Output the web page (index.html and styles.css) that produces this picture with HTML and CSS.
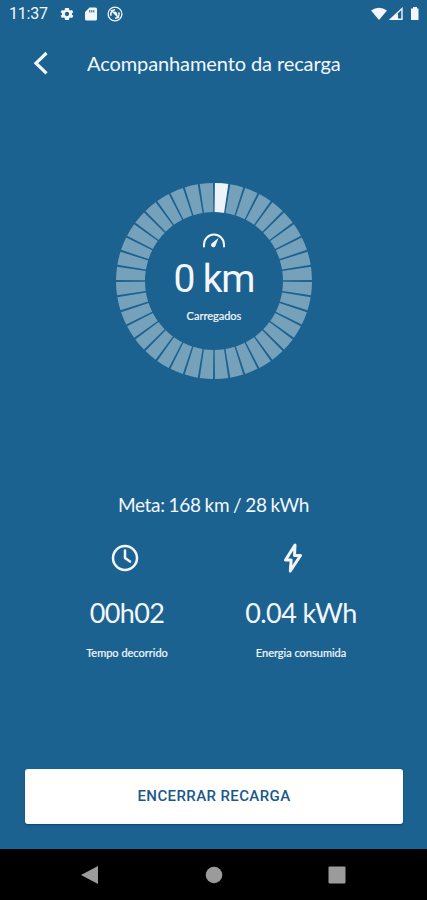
FILE: index.html
```html
<!DOCTYPE html>
<html lang="pt-BR">
<head>
<meta charset="utf-8">
<title>Acompanhamento da recarga</title>
<link rel="stylesheet" href="styles.css">
</head>
<body>
<div class="screen">
  <header class="status">
    <span class="clock">11:37</span>
    <svg class="gear" width="16" height="16" viewBox="0 0 24 24"><path fill="currentColor" fill-rule="evenodd" d="M19.4 13c.1-.7.1-1.300 0-2l2.100-1.600-2-3.500-2.500 1a8 8 0 0 0-1.700-1L15 3H9l-.4 2.900c-.6.3-1.200.6-1.700 1l-2.500-1-2 3.500L4.600 11c-.1.700-.1 1.300 0 2l-2.200 1.600 2 3.500 2.500-1c.5.400 1.100.7 1.700 1L9 21h6l.4-2.900c.6-.3 1.200-.6 1.700-1l2.500 1 2-3.500zM12 15.200a3.200 3.200 0 1 1 0-6.400 3.200 3.200 0 0 1 0 6.400z"/></svg>
    <svg class="sd" width="12" height="14" viewBox="0 0 12 14"><path fill="currentColor" fill-rule="evenodd" d="M4.500.5H10.500Q12 .5 12 2V12Q12 13.500 10.500 13.500H1.500Q0 13.500 0 12V5zM4.300 3v2.400h1V3zM6.300 3v2.400h1V3zM8.300 3v2.400h1V3z"/></svg>
    <svg class="sync" width="16" height="16" viewBox="0 0 16 16" fill="none" stroke="currentColor"><circle cx="8" cy="8" r="6.900" stroke-width="1.300"/><path stroke-width="1.500" d="M4.200 9.800A4.200 4.200 0 0 1 8 3.800M11.800 6.200A4.200 4.200 0 0 1 8 12.200M4 4l8 8M7 6.500a2 2 0 0 1 2.600 2.600"/></svg>
    <svg class="signals" width="49" height="16" viewBox="0 0 49 16"><path fill="currentColor" d="M0 4.600Q8 -1 16 4.600L8 14z"/><path fill="none" stroke="currentColor" stroke-width="1.400" d="M31 2.500V13.300H19.500z"/><path fill="currentColor" d="M27 7v6h-7zM40 2.500h2V1h4v1.500h1.500V14H40z"/></svg>
  </header>
  <nav class="topbar">
    <svg width="18" height="26" viewBox="0 0 18 26"><path class="line back" d="M15.500 3L5 13.200 15.500 23.400"/></svg>
    <h1>Acompanhamento da recarga</h1>
  </nav>
  <section class="gauge">
    <svg class="ring" viewBox="0 0 200 200">
      <circle class="track" cx="100" cy="100" r="83.500" pathLength="400"/>
      <circle class="progress" cx="100" cy="100" r="83.500" pathLength="400"/>
    </svg>
    <div class="reading">
      <svg width="24" height="16" viewBox="0 0 24 16"><path class="line dial" d="M2 14.500V12.500A10 10 0 0 1 22 12.500V14.500"/><path fill="currentColor" d="M16.500 6L13.600 13.500A2.300 2.300 0 1 1 10.200 11z"/></svg>
      <strong>0 km</strong>
      <span>Carregados</span>
    </div>
  </section>
  <p class="goal">Meta: 168 km / 28 kWh</p>
  <section class="stats">
    <div class="stat time">
      <svg width="28" height="28" viewBox="0 0 28 28"><circle class="line" cx="14" cy="14" r="12"/><path class="line" d="M14 6.500V14l5 3.500"/></svg>
      <strong>00h02</strong>
      <span>Tempo decorrido</span>
    </div>
    <div class="stat energy">
      <svg width="20" height="32" viewBox="0 0 20 32"><path class="line bolt" d="M12 3L2.500 18H8.200L7.300 29 17.500 13.500H11.500z"/></svg>
      <strong>0.04 kWh</strong>
      <span>Energia consumida</span>
    </div>
  </section>
  <button class="stop">ENCERRAR RECARGA</button>
  <footer class="android">
    <svg width="18" height="20" viewBox="0 0 18 20"><path d="M0 10L17 1V19z"/></svg>
    <svg width="18" height="18" viewBox="0 0 18 18"><circle cx="9" cy="9" r="8.300"/></svg>
    <svg width="18" height="18" viewBox="0 0 18 18"><rect x=".5" y=".5" width="17" height="17" rx="1"/></svg>
  </footer>
</div>
</body>
</html>
```
FILE: styles.css
```css
* { box-sizing: border-box; }
body { margin: 0; background: #1b6290; }
.screen {
  width: 427px; height: 900px; display: flex; flex-direction: column;
  background: #1b6290; color: #f3f7fc; font-family: Lato, sans-serif; overflow: hidden;
}
svg { display: block; flex: none; }
.line { fill: none; stroke: currentColor; stroke-width: 2.500; stroke-linejoin: round; stroke-linecap: round; }
.back { stroke-width: 3.200; stroke-linecap: butt; stroke-linejoin: miter; }
.bolt { stroke-width: 3; }
.dial { stroke-width: 2; }
.status { height: 28px; display: flex; align-items: center; padding: 0 7px 0 9px; }
.clock { width: 50px; font: 16px/28px Roboto, sans-serif; letter-spacing: -.2px; }
.sd { margin-left: 10px; }
.sync { margin-left: 10px; }
.signals { margin-left: auto; }
.topbar { height: 70px; display: flex; align-items: center; padding-left: 31px; }
h1 { margin: 0 0 0 38px; font-size: 20px; font-weight: 400; line-height: 26px; letter-spacing: -.1px; white-space: nowrap; }
.gauge { width: 200px; height: 200px; margin: 83px 0 0 114px; display: grid; }
.ring, .reading { grid-area: 1 / 1; }
.ring { width: 200px; height: 200px; transform: rotate(-90deg); }
.ring circle { fill: none; stroke-width: 29; }
.track { stroke: #76a1bb; stroke-dasharray: 8.700 1.300; stroke-dashoffset: -.65; }
.progress { stroke: #eef3fa; stroke-dasharray: 0 .65 8.700 400; }
.reading { display: flex; flex-direction: column; align-items: center; padding-top: 51px; }
.reading strong { font: 400 39px/46px Roboto, sans-serif; letter-spacing: -1.200px; margin-top: 8px; }
.reading span { font-size: 11px; line-height: 14px; margin-top: 7px; -webkit-text-stroke: .2px; }
.goal { margin: 111px 0 0; height: 26px; line-height: 26px; font-size: 19px; letter-spacing: -.3px; word-spacing: -.7px; text-align: center; }
.stats { display: flex; height: 150px; margin-top: 24px; }
.stat { display: flex; flex-direction: column; align-items: center; }
.time { width: 174px; margin-left: 40px; }
.energy { width: 174px; }
.stat svg { height: 32px; margin-right: 5px; }
.energy svg { margin-right: 17px; }
.stat strong { font-size: 27px; font-weight: 400; line-height: 34px; letter-spacing: -.6px; margin-top: 22px; }
.stat span { font-size: 11px; line-height: 14px; margin-top: 16px; -webkit-text-stroke: .2px; }
.stop {
  width: 378px; height: 55px; margin: 77px 0 0 25px; padding: 0 0 2px; border: 0; border-radius: 3px;
  background: #fff; color: #1b568d; font: 500 15px/20px Roboto, sans-serif; letter-spacing: .4px;
  box-shadow: 0 1px 2px #0d466c;
}
.android {
  height: 51px; margin-top: auto; background: #000; display: flex; align-items: center;
  justify-content: space-between; padding: 0 81px;
}
.android svg { fill: #9b9b9b; }
```
